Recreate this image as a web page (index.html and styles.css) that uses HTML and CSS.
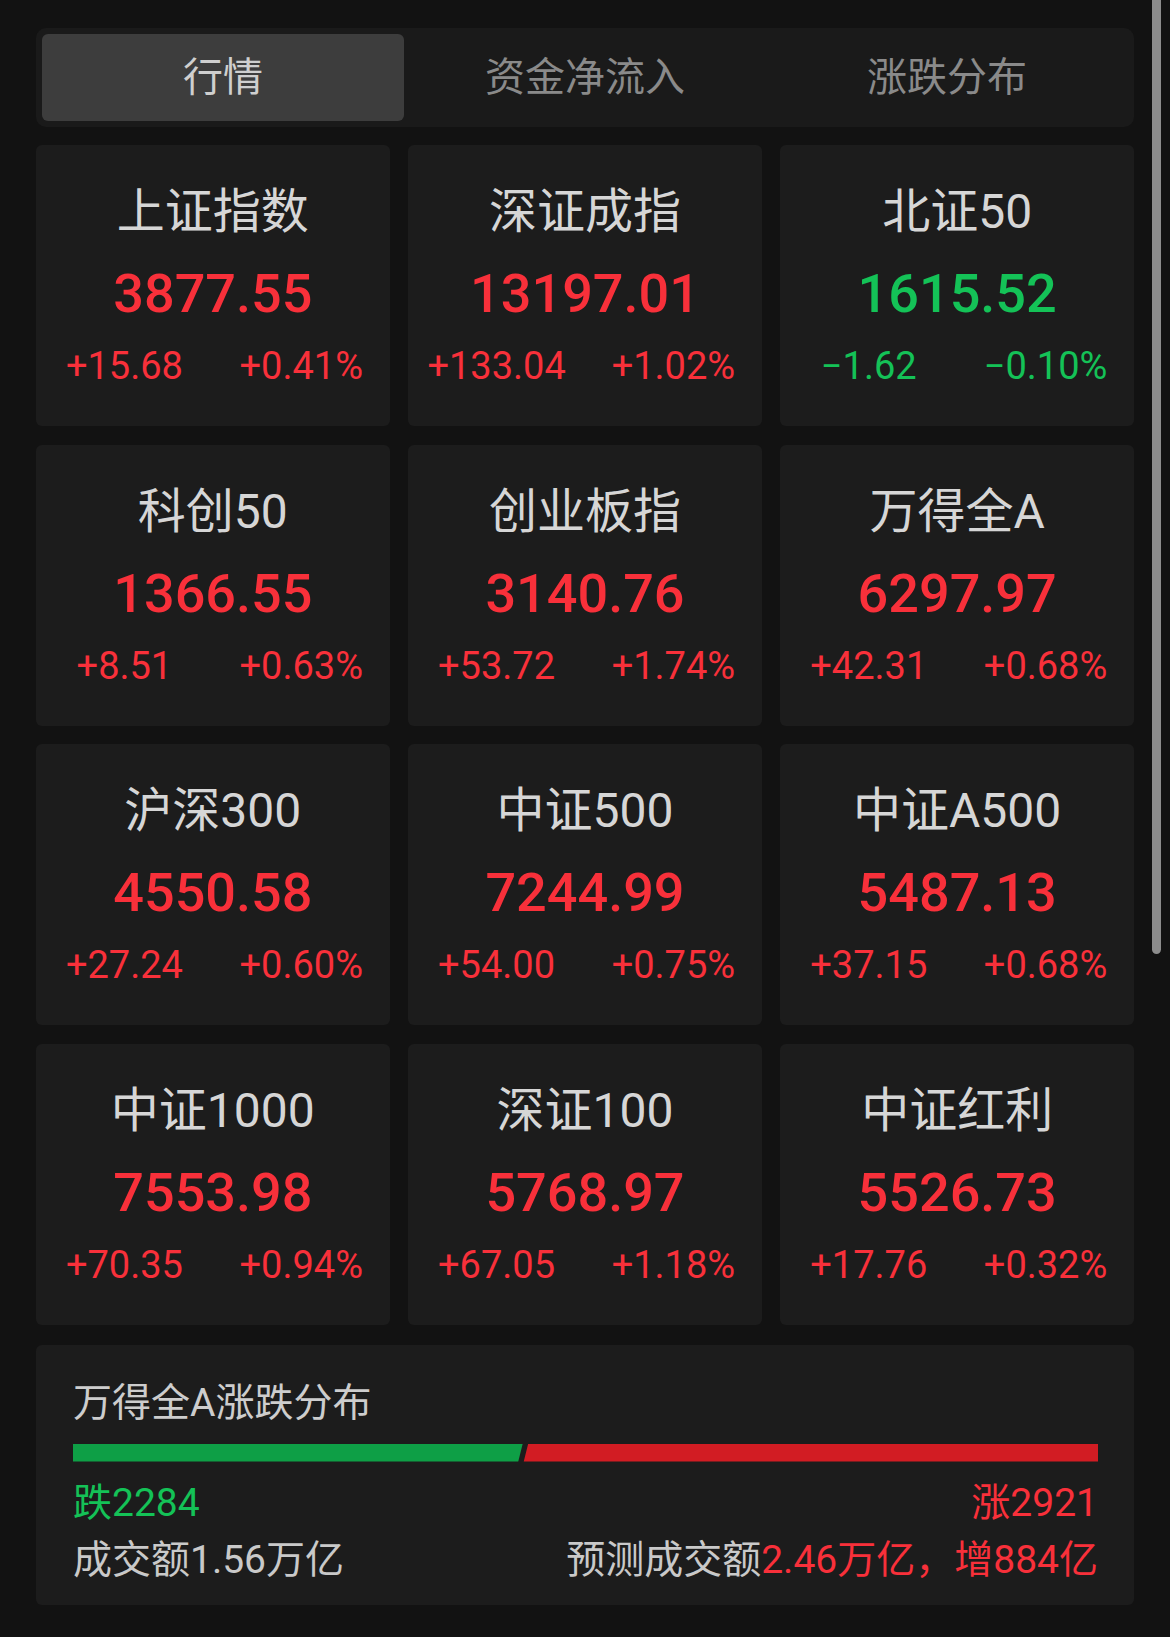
FILE: index.html
```html
<!DOCTYPE html>
<html lang="zh-CN">
<head>
<meta charset="utf-8">
<link rel="stylesheet" href="styles.css">
</head>
<body>
<div class="page">
  <div class="tabs">
    <div class="tab active">行情</div>
    <div class="tab">资金净流入</div>
    <div class="tab">涨跌分布</div>
  </div>

  <div class="grid">
    <div class="card"><div class="title">上证指数</div><div class="num up">3877.55</div><div class="chg up"><span>+15.68</span><span>+0.41%</span></div></div>
    <div class="card"><div class="title">深证成指</div><div class="num up">13197.01</div><div class="chg up"><span>+133.04</span><span>+1.02%</span></div></div>
    <div class="card"><div class="title">北证50</div><div class="num down">1615.52</div><div class="chg down"><span>−1.62</span><span>−0.10%</span></div></div>

    <div class="card"><div class="title">科创50</div><div class="num up">1366.55</div><div class="chg up"><span>+8.51</span><span>+0.63%</span></div></div>
    <div class="card"><div class="title">创业板指</div><div class="num up">3140.76</div><div class="chg up"><span>+53.72</span><span>+1.74%</span></div></div>
    <div class="card"><div class="title">万得全A</div><div class="num up">6297.97</div><div class="chg up"><span>+42.31</span><span>+0.68%</span></div></div>

    <div class="card"><div class="title">沪深300</div><div class="num up">4550.58</div><div class="chg up"><span>+27.24</span><span>+0.60%</span></div></div>
    <div class="card"><div class="title">中证500</div><div class="num up">7244.99</div><div class="chg up"><span>+54.00</span><span>+0.75%</span></div></div>
    <div class="card"><div class="title">中证A500</div><div class="num up">5487.13</div><div class="chg up"><span>+37.15</span><span>+0.68%</span></div></div>

    <div class="card"><div class="title">中证1000</div><div class="num up">7553.98</div><div class="chg up"><span>+70.35</span><span>+0.94%</span></div></div>
    <div class="card"><div class="title">深证100</div><div class="num up">5768.97</div><div class="chg up"><span>+67.05</span><span>+1.18%</span></div></div>
    <div class="card"><div class="title">中证红利</div><div class="num up">5526.73</div><div class="chg up"><span>+17.76</span><span>+0.32%</span></div></div>
  </div>

  <div class="panel">
    <div class="panel-title">万得全A涨跌分布</div>
    <div class="bar">
      <div class="bar-down" style="width: 43.88%"></div>
      <div class="bar-up"></div>
    </div>
    <div class="row">
      <span class="down">跌2284</span>
      <span class="up">涨2921</span>
    </div>
    <div class="row">
      <span class="muted">成交额1.56万亿</span>
      <span><span class="muted">预测成交额</span><span class="up">2.46万亿，增884亿</span></span>
    </div>
  </div>
</div>
<div class="scrollbar"></div>
</body>
</html>
```

FILE: styles.css
```css
html, body {
  margin: 0;
  padding: 0;
  background: #121212;
}
body {
  width: 1170px;
  height: 1637px;
  overflow: hidden;
  position: relative;
  font-family: Roboto, "Noto Sans CJK SC", sans-serif;
}
.page {
  width: 1098px;
  padding: 28px 0 0 36px;
}
.tabs {
  display: grid;
  grid-template-columns: repeat(3, 1fr);
  padding: 6px 6px;
  background: #1a1a1a;
  border-radius: 10px;
}
.tab {
  height: 87px;
  line-height: 87px;
  text-align: center;
  font-size: 40px;
  color: #8a8a8a;
  border-radius: 6px;
}
.tab.active {
  background: #3d3d3d;
  color: #cfcfcf;
}
.grid {
  margin-top: 18px;
  display: grid;
  grid-template-columns: repeat(3, 1fr);
  gap: 18.5px;
}
.card {
  height: 281px;
  box-sizing: border-box;
  padding-top: 37px;
  background: #1c1c1c;
  border-radius: 6px;
  text-align: center;
}
.title {
  font-size: 48px;
  line-height: 60px;
  color: #d6d6d6;
}
.num {
  margin-top: 17px;
  font-size: 54px;
  line-height: 70px;
  font-weight: 500;
}
.chg {
  margin-top: 12px;
  display: grid;
  grid-template-columns: 1fr 1fr;
  font-size: 38px;
  line-height: 50px;
}
.up { color: #f8303a; }
.down { color: #14c257; }
.muted { color: #c9c9c9; }
.panel {
  margin-top: 20px;
  height: 260px;
  box-sizing: border-box;
  padding: 32px 36px 0 37px;
  background: #1c1c1c;
  border-radius: 6px;
}
.panel-title {
  font-size: 39px;
  line-height: 52px;
  color: #cdcdcd;
}
.bar {
  margin-top: 15px;
  height: 18px;
  display: flex;
}
.bar-down {
  height: 100%;
  background: #0e9f46;
  clip-path: polygon(0 0, 100% 0, calc(100% - 4.5px) 100%, 0 100%);
}
.bar-up {
  flex: 1;
  height: 100%;
  background: #d21c23;
  clip-path: polygon(5.5px 0, 100% 0, 100% 100%, 1px 100%);
}
.row {
  display: flex;
  justify-content: space-between;
  font-size: 39px;
  line-height: 57px;
}
.bar + .row { margin-top: 13px; }
.scrollbar {
  position: absolute;
  top: 0;
  left: 1152px;
  width: 9px;
  height: 954px;
  background: #8c8c8c;
  border-radius: 0 0 5px 5px;
}
```
